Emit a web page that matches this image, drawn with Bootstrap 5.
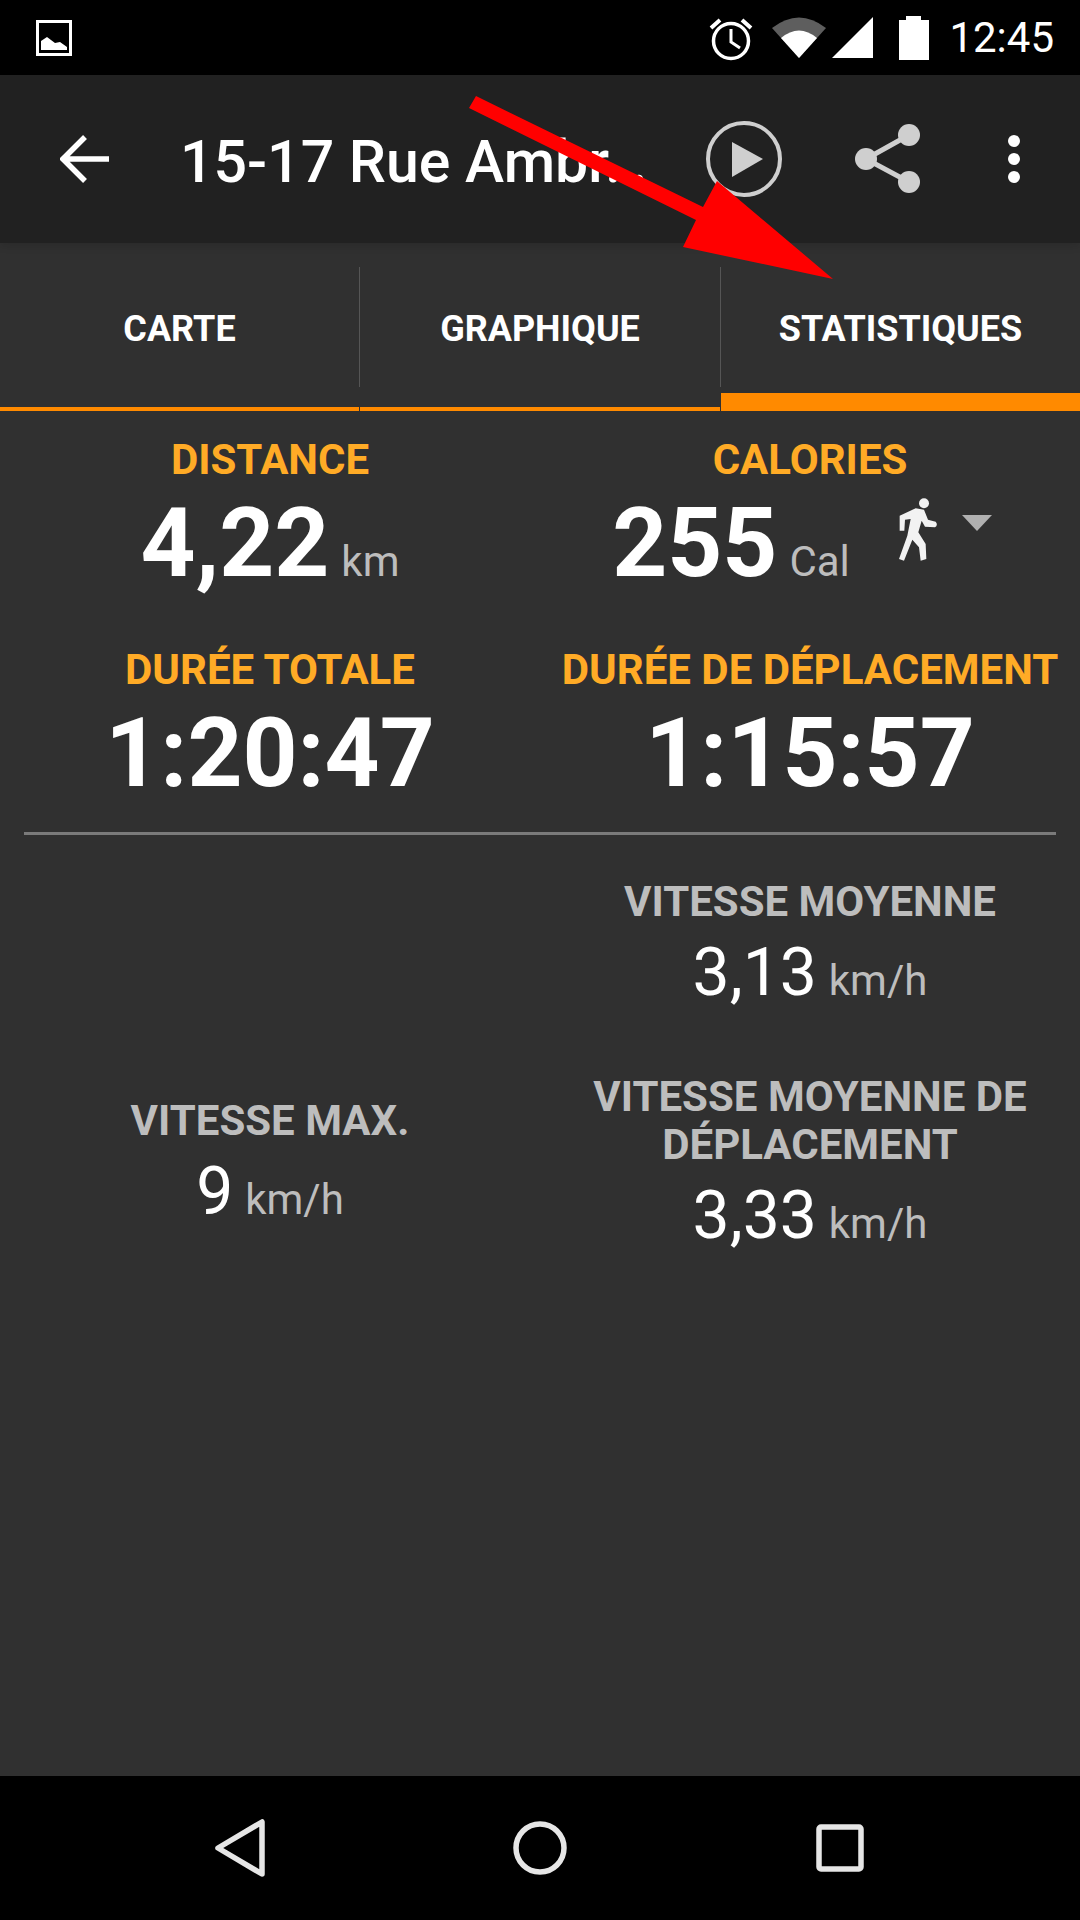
<!DOCTYPE html>
<html lang="fr">
<head>
<meta charset="UTF-8">
<meta name="viewport" content="width=device-width, initial-scale=1.0">
<title>Statistiques</title>
<link href="https://cdn.jsdelivr.net/npm/bootstrap@5.3.0/dist/css/bootstrap.min.css" rel="stylesheet">
<style>
    html, body { height: 1920px; }
    body { width: 1080px; background: #303030; font-family: Roboto, "Liberation Sans", sans-serif; color: #fff; overflow: hidden; position: relative; }
    .status-strip { height: 75px; background: #000; padding: 0 26px 0 36px; }
    .status-time { font-size: 42px; line-height: 1; font-weight: 400; margin-left: 20px; }
    .app-strip { height: 168px; background: #212121; box-shadow: 0 3px 8px rgba(0, 0, 0, .12); }
    .app-title { font-size: 59px; font-weight: 500; line-height: 1; position: absolute; left: 180px; top: 132px; white-space: nowrap; }
    .tab-strip { height: 168px; }
    .tab-cell { font-size: 36px; font-weight: 700; padding-top: 24px; }
    .tab-mid { width: 361px; }
    .tab-last { width: 359px; }
    .tab-label { height: 120px; padding-top: 4px; margin-bottom: 20px; border-right: 1px solid #555; }
    .tab-line { height: 4px; background: #ff8a00; margin-right: 1px; }
    .tab-line-on { height: 18px; margin-top: -14px; margin-right: 0; }
    .stat-block { padding-top: 25px; }
    .stat-head { color: #ffab26; font-size: 42px; font-weight: 700; line-height: 48px; }
    .stat-big { font-size: 96px; font-weight: 700; line-height: 119px; }
    .stat-unit { font-size: 42px; font-weight: 400; line-height: 1; color: #bdbdbd; margin-left: 12px; }
    .stat-gap { margin-top: 43px; }
    .stat-rule { height: 3px; background: #7a7a7a; margin: 19px 24px 0; }
    .speed-head { color: #bdbdbd; font-size: 42px; font-weight: 700; line-height: 48px; padding: 0 24px; }
    .speed-val { font-size: 66px; font-weight: 400; line-height: 94px; padding-bottom: 2px; }
    .speed-first { margin-top: 43px; }
    .speed-second { margin-top: 51px; }
    .calorie-group { padding-right: 16px; }
    .nav-strip { height: 144px; background: #000; }
    .nav-cell { width: 300px; }
    .over-arrow { position: absolute; left: 0; top: 0; pointer-events: none; }
</style>
</head>
<body class="d-flex flex-column">

<div class="status-strip d-flex align-items-center">
    <svg width="36" height="36" viewBox="0 0 36 36"><rect x="1.5" y="1.5" width="33" height="33" fill="none" stroke="#fff" stroke-width="3"/><path d="M5 30V21L11 17L19 23L24 22L31 27V30Z" fill="#fff"/></svg>
    <div class="ms-auto d-flex align-items-center">
        <svg width="46" height="46" viewBox="0 0 46 46"><circle cx="23" cy="26" r="17.5" fill="none" stroke="#fff" stroke-width="3.5"/><path d="M23 14V27L32 33" fill="none" stroke="#fff" stroke-width="3"/><path d="M3 13L12 5M43 13L34 5" stroke="#fff" stroke-width="4"/></svg>
        <svg style="margin-left:18px" width="54" height="42" viewBox="0 0 54 42"><path d="M27 41L0 11Q27 -10 54 11Z" fill="#5e5e5e"/><path d="M27 41L9 21Q27 6 45 21Z" fill="#fff"/></svg>
        <svg style="margin-left:6px" width="42" height="42" viewBox="0 0 42 42"><path d="M0 41H41V0Z" fill="#fff"/></svg>
        <svg style="margin-left:25px" width="30" height="44" viewBox="0 0 30 44"><path d="M7 0H22V4H30V44H0V4H7Z" fill="#fff"/></svg>
        <span class="status-time">12:45</span>
    </div>
</div>

<div class="app-strip d-flex position-relative">
    <svg style="margin:60px 0 0 60px" width="50" height="48" viewBox="0 0 50 48"><path d="M25 2L3 24L25 46M3 24H49" fill="none" stroke="#fff" stroke-width="5.5"/></svg>
</div>
<div class="app-title">15-17 Rue Ambr…</div>

<div class="tab-strip d-flex text-center">
    <div class="col-4 tab-cell">
        <div class="tab-label d-flex align-items-center justify-content-center">CARTE</div>
        <div class="tab-line"></div>
    </div>
    <div class="tab-mid tab-cell">
        <div class="tab-label d-flex align-items-center justify-content-center">GRAPHIQUE</div>
        <div class="tab-line"></div>
    </div>
    <div class="tab-last tab-cell">
        <div class="tab-label d-flex align-items-center justify-content-center border-0">STATISTIQUES</div>
        <div class="tab-line tab-line-on"></div>
    </div>
</div>

<div class="stat-block">
    <div class="row g-0 text-center">
        <div class="col-6">
            <div class="stat-head">DISTANCE</div>
            <div class="stat-big">4,22<span class="stat-unit">km</span></div>
        </div>
        <div class="col-6">
            <div class="stat-head">CALORIES</div>
            <div class="d-flex justify-content-center align-items-start calorie-group">
                <div class="stat-big">255<span class="stat-unit">Cal</span></div>
                <svg style="margin:14px 0 0 49px" width="40" height="63" viewBox="950 197 120 189"><circle cx="1025" cy="213" r="15" fill="#f2f2f2"/><path d="M952 250L1000 228L1025 232L1037 262L1060 268Q1068 278 1058 285L1028 283L1018 265L1008 300L1030 335L1032 380L1015 385L1010 345L990 322L965 385L950 380L975 310L985 260L968 262L966 295L952 295Z" fill="#f2f2f2"/></svg>
                <svg style="margin:31px 0 0 23px" width="30" height="16" viewBox="0 0 30 16"><path d="M0 0H30L15 16Z" fill="#b0b0b0"/></svg>
            </div>
        </div>
    </div>
    <div class="row g-0 text-center stat-gap">
        <div class="col-6">
            <div class="stat-head">DURÉE TOTALE</div>
            <div class="stat-big">1:20:47</div>
        </div>
        <div class="col-6">
            <div class="stat-head">DURÉE DE DÉPLACEMENT</div>
            <div class="stat-big">1:15:57</div>
        </div>
    </div>
    <div class="stat-rule"></div>
</div>

<div class="flex-grow-1">
    <div class="row g-0 text-center speed-first">
        <div class="col-6"></div>
        <div class="col-6">
            <div class="speed-head">VITESSE MOYENNE</div>
            <div class="speed-val">3,13<span class="stat-unit">km/h</span></div>
        </div>
    </div>
    <div class="row g-0 text-center align-items-center speed-second">
        <div class="col-6">
            <div class="speed-head">VITESSE MAX.</div>
            <div class="speed-val">9<span class="stat-unit">km/h</span></div>
        </div>
        <div class="col-6">
            <div class="speed-head">VITESSE MOYENNE DE DÉPLACEMENT</div>
            <div class="speed-val">3,33<span class="stat-unit">km/h</span></div>
        </div>
    </div>
</div>

<div class="nav-strip d-flex align-items-center justify-content-center text-center">
    <div class="nav-cell"><svg width="52" height="60" viewBox="0 0 52 60"><path d="M4 30L48 4V56Z" fill="none" stroke="#e6e6e6" stroke-width="5.5" stroke-linejoin="round"/></svg></div>
    <div class="nav-cell"><svg width="54" height="54" viewBox="0 0 54 54"><circle cx="27" cy="27" r="24" fill="none" stroke="#e6e6e6" stroke-width="5.5"/></svg></div>
    <div class="nav-cell"><svg width="48" height="48" viewBox="0 0 48 48"><rect x="3" y="3" width="42" height="42" rx="2" fill="none" stroke="#e6e6e6" stroke-width="5.5"/></svg></div>
</div>

<svg class="over-arrow" width="1080" height="400" viewBox="0 0 1080 400">
    <circle cx="744" cy="159" r="36" fill="none" stroke="#cfcfcf" stroke-width="4"/>
    <path d="M732 142L763 159L732 177Z" fill="#cfcfcf"/>
    <path d="M909 135L866 159L909 182" fill="none" stroke="#cfcfcf" stroke-width="5"/>
    <circle cx="909" cy="135" r="11" fill="#cfcfcf"/><circle cx="866" cy="159" r="11" fill="#cfcfcf"/><circle cx="909" cy="182" r="11" fill="#cfcfcf"/>
    <circle cx="1014" cy="141" r="6" fill="#fff"/><circle cx="1014" cy="159" r="6" fill="#fff"/><circle cx="1014" cy="177" r="6" fill="#fff"/>
    <path d="M476 96L703 207L717 181L833 279L683 247L696 220L469 108Z" fill="#f00"/>
</svg>

</body>
</html>
